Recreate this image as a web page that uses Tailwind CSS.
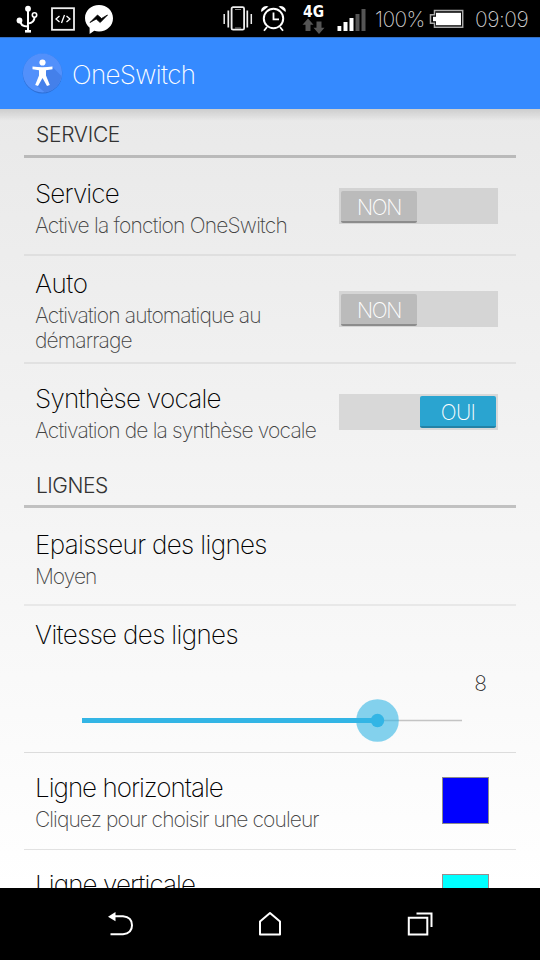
<!DOCTYPE html>
<html lang="fr">
<head>
<meta charset="utf-8">
<title>OneSwitch</title>
<script src="https://cdn.jsdelivr.net/npm/@tailwindcss/browser@4"></script>
</head>
<body class="flex h-[960px] w-[540px] flex-col overflow-hidden bg-black font-['Inter','Liberation_Sans',sans-serif] font-extralight">

<!-- Status bar -->
<header class="flex h-[37px] shrink-0 items-center bg-black text-[21px] text-[#d0d0d0]">
  <svg class="h-[37px] w-[120px]" viewBox="0 0 120 37" fill="none">
    <g stroke="#fff" stroke-width="2">
      <path d="M28 9v22M20 20q0 6.500 8 6.500M34.500 17q0 6-6.500 6.500"/>
      <circle cx="34.500" cy="15" r="2.200" stroke-width="1.600"/>
    </g>
    <g fill="#fff"><circle cx="28" cy="8.700" r="2.900"/><circle cx="19.500" cy="20.500" r="2.900"/><path d="M25 30h6v2.600h-6z"/></g>
    <rect x="52" y="8.200" width="22" height="21.600" stroke="#eee" stroke-width="1.800"/>
    <path d="M59.500 16l-3.500 3 3.500 3M66.500 16l3.500 3-3.500 3M64.500 15l-3 8" stroke="#fff" stroke-width="1.300"/>
    <path d="M99 5c-8 0-14 5.800-14 13 0 4 1.800 7.500 4.600 9.800V34l4.600-3.200c1.500.4 3.100.600 4.800.600 8 0 14-5.800 14-13.200S107 5 99 5z" fill="#fff"/>
    <path d="M90 22.500l7.500-7.500 4 3.500 6-3.500-7.300 7.500-4-3.500z" fill="#000" stroke="#000" stroke-width=".8"/>
  </svg>
  <svg class="ml-[100px] h-[37px] w-[150px]" viewBox="220 0 150 37" fill="none">
    <rect x="231.600" y="7.200" width="12.500" height="22.500" rx="1.500" stroke="#eee" stroke-width="1.800"/>
    <path d="M235 9.500h6M235 28h6" stroke="#aaa" stroke-width=".8"/>
    <path d="M228.300 10.500v17M247.300 10.500v17" stroke="#eee" stroke-width="1.700"/>
    <path d="M224.200 14v10M251.300 14v10" stroke="#eee" stroke-width="1.500"/>
    <circle cx="273.500" cy="18.500" r="9.700" stroke="#fff" stroke-width="2"/>
    <path d="M273.500 12.500v6.800h5.500M267 27l-3 3.800M280 27l3 3.800" stroke="#fff" stroke-width="1.800"/>
    <path d="M261.500 12c-1.500-3.500 3-7.500 7-5.500zM285.500 12c1.500-3.500-3-7.500-7-5.500z" fill="#fff"/>
    <text x="303" y="16.500" fill="#fff" font-family="DejaVu Sans" font-weight="700" font-size="16.500" textLength="21" lengthAdjust="spacingAndGlyphs">4G</text>
    <path d="M308 18.500l5.500 6.200h-3V31h-5v-6.300h-3zM319 34l5.500-6.200h-3V21.500h-5v6.300h-3z" fill="#555"/>
    <path d="M337.500 26h3.800v5h-3.800zM343.500 22h4v9h-4zM349.500 18h4v13h-4z" fill="#fff"/>
    <path d="M355.500 14h4v17h-4zM361.500 9h4v22h-4z" fill="#555"/>
  </svg>
  <span class="ml-[5px] w-[52px] whitespace-nowrap tracking-[-0.6px] pt-[3px]">100%</span>
  <svg class="ml-[1px] h-[37px] w-[36px]" viewBox="428 0 36 37" fill="none">
    <path d="M434.500 10.500h28.200v16.800h-28.200v-4h-4v-8.500h4z" stroke="#aaa" stroke-width="1.500"/>
    <path d="M436 12.800h25v12.400h-25v-4h-3v-4.500h3z" fill="#fff"/>
  </svg>
  <span class="ml-[11px] whitespace-nowrap pt-[3px] tracking-[-0.5px]">09:09</span>
</header>

<!-- Title bar -->
<div class="flex h-[72px] shrink-0 items-center border-t border-[#3470c4] bg-[#358aff] pl-[21px] text-white">
  <svg class="mb-[2px] size-[42px]" viewBox="0 0 42 42">
    <circle cx="21.500" cy="21.600" r="19.800" fill="#2c6fd6"/>
    <circle cx="21.500" cy="21" r="19.600" fill="#5290fb"/>
    <path d="M31.500 15l9 9c-1.500 9.500-8.500 15-16.500 16.500L15 33l7-15z" fill="#4480ea"/>
    <circle cx="21.500" cy="10.500" r="3.100" fill="#fff"/>
    <path d="M11.500 14.500q10 1.300 20 0v2.800l-6.500.9v5.300l3.800 9.500-2.800 1-4.500-8-4.500 8-2.800-1 3.800-9.500v-5.300l-6.500-.9z" fill="#fff"/>
  </svg>
  <h1 class="ml-[9px] pt-[2px] text-[26px] tracking-[-0.65px]">OneSwitch</h1>
</div>

<!-- Preferences -->
<main class="h-[779px] shrink-0 overflow-hidden bg-linear-to-b from-[#e9e9e9] to-white">
 <div class="h-full bg-linear-to-b from-black/12 to-transparent to-[12px] px-6">
  <h2 class="flex h-[49px] items-end border-b-[3px] border-[#bababa] pb-[7px] pl-[12px] text-[21px] leading-[26px] font-light tracking-[-0.3px] text-[#333]">SERVICE</h2>

  <section class="flex h-[98px] items-center justify-between border-b-2 border-[#dfdfdf] pr-[18px] pl-[11px]">
    <div class="self-start pt-[20px]">
      <h3 class="text-[26px] leading-8 tracking-[-0.85px] text-black">Service</h3>
      <p class="mt-[3px] text-[21px] leading-[25px] tracking-[-0.79px] text-[#444]">Active la fonction OneSwitch</p>
    </div>
    <div class="flex h-9 w-[159px] shrink-0 items-center bg-[#d3d3d3] px-[2px]">
      <span class="mt-[2px] flex h-8 w-[76px] items-center justify-center rounded-xs border-b-2 border-[#8c8c8c] bg-[#bbb] pt-[3px] text-[21px] tracking-[-1.3px] text-white">NON</span>
    </div>
  </section>

  <section class="flex h-[108px] items-center justify-between border-b-2 border-[#e1e1e1] pr-[18px] pl-[11px]">
    <div class="w-[250px] self-start pt-[12px]">
      <h3 class="text-[26px] leading-8 tracking-[-0.5px] text-black">Auto</h3>
      <p class="mt-[3px] text-[21px] leading-[25px] tracking-[-0.83px] text-[#444]">Activation automatique au démarrage</p>
    </div>
    <div class="flex h-9 w-[159px] shrink-0 items-center bg-[#d5d5d5] px-[2px]">
      <span class="mt-[2px] flex h-8 w-[76px] items-center justify-center rounded-xs border-b-2 border-[#8c8c8c] bg-[#bbb] pt-[3px] text-[21px] tracking-[-1.3px] text-white">NON</span>
    </div>
  </section>

  <section class="flex h-[98px] items-center justify-between pr-[18px] pb-[3px] pl-[11px]">
    <div class="self-start pt-[19px]">
      <h3 class="text-[26px] leading-8 tracking-[-0.72px] whitespace-nowrap text-black">Synthèse vocale</h3>
      <p class="mt-[3px] text-[21px] leading-[25px] tracking-[-0.83px] whitespace-nowrap text-[#444]">Activation de la synthèse vocale</p>
    </div>
    <div class="flex h-9 w-[159px] shrink-0 items-center justify-end bg-[#d8d8d8] px-[2px]">
      <span class="flex h-8 w-[76px] items-center justify-center rounded-xs border-b-2 border-[#2482a6] bg-[#2aa4d0] pt-[4px] text-[21px] tracking-[-0.7px] text-white">OUI</span>
    </div>
  </section>

  <h2 class="flex h-[46px] items-end border-b-[3px] border-[#c1c1c1] pb-[6px] pl-[12px] text-[21px] leading-[26px] font-light tracking-[-0.5px] text-[#333]">LIGNES</h2>

  <section class="h-[98px] border-b-2 border-[#e8e8e8] pt-[21px] pl-[11px]">
    <h3 class="text-[26px] leading-8 tracking-[-0.64px] text-black">Epaisseur des lignes</h3>
    <p class="mt-[3px] text-[21px] leading-[25px] tracking-[-1px] text-[#444]">Moyen</p>
  </section>

  <section class="h-[147px] border-b border-[#dcdcdc] pt-[13px] pl-[11px]">
    <h3 class="text-[26px] leading-8 tracking-[-0.64px] text-black">Vitesse des lignes</h3>
    <p class="mt-[20px] pr-[29px] text-right text-[21px] leading-[25px] text-[#222]">8</p>
    <svg class="mt-[3px] ml-[46px] h-[43px] w-[382px]" viewBox="81 699 382 43">
      <path d="M82 720.500h380" stroke="#c4c4c4" stroke-width="1.300"/>
      <circle cx="377.500" cy="720.500" r="21.300" fill="#33b5e5" fill-opacity=".6"/>
      <path d="M82 720.500h295" stroke="#33b5e5" stroke-width="5"/>
      <circle cx="377.500" cy="720.500" r="6.700" fill="#33b5e5"/>
    </svg>
  </section>

  <section class="flex h-[97px] items-center justify-between border-b border-[#e2e2e2] pr-[27px] pl-[11px]">
    <div class="self-start pt-[19px]">
      <h3 class="text-[26px] leading-8 tracking-[-1px] text-black">Ligne horizontale</h3>
      <p class="mt-[3px] text-[21px] leading-[25px] tracking-[-0.91px] text-[#444]">Cliquez pour choisir une couleur</p>
    </div>
    <div class="mb-px size-[47px] border border-[#8c8c8c] bg-[#0000ff]"></div>
  </section>

  <section class="flex h-[97px] items-center justify-between pr-[27px] pl-[11px]">
    <h3 class="self-start pt-[19px] text-[26px] leading-8 tracking-[-0.9px] text-black">Ligne verticale</h3>
    <div class="mb-[2px] size-[47px] border border-[#9c8c8c] bg-[#00ffff]"></div>
  </section>
 </div>
</main>

<!-- Navigation bar -->
<nav class="flex h-[72px] shrink-0 items-center bg-black">
  <svg class="h-[72px] w-[540px]" viewBox="0 888 540 72" fill="none" stroke="#fff" stroke-width="2">
    <path d="M113 916.300h10q9 .8 9 9t-9 9h-12.500"/>
    <path d="M108 916.700l7.500-4.700v9.200z" fill="#fff" stroke="none"/>
    <path d="M260 921.500v13h20v-13l-10-8.500z" stroke-linejoin="round"/>
    <path d="M408.800 917.800h18.500v16.700h-18.500zM416.500 913.500h15v13.500"/>
  </svg>
</nav>
</body>
</html>
